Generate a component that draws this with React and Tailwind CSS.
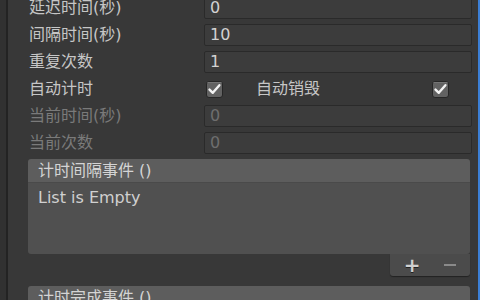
import React from 'react'

const FONT = { fontFamily: '"DejaVu Sans", "Noto Sans CJK SC", sans-serif' }

// Unity style toggle, box + tick drawn as one small icon
function Check() {
  return (
    <svg width="17" height="17" viewBox="0 0 17 17" className="shrink-0 block">
      <rect x="0.5" y="0.5" width="16" height="16" rx="2.5" fill="#626262" stroke="#262626" />
      <path d="M1.5 1.5 H15.5" stroke="#757575" />
      <path d="M3.5 8.6 L6.8 11.8 L13.4 4.2" fill="none" stroke="#f2f2f2" strokeWidth="2.4" strokeLinecap="round" strokeLinejoin="round" />
    </svg>
  )
}

function FieldRow({ label, value, disabled }) {
  return (
    <div className="flex items-center h-[22px]">
      <div className={`w-[175px] shrink-0 ${disabled ? 'text-[#7a7a7a]' : 'text-[#c6c6c6]'}`}>{label}</div>
      <div className="flex-1 h-full bg-[#3c3c3c] border border-[#2a2a2a] rounded-[2px] flex items-center pl-[5px]">
        <span className={disabled ? 'text-[#6e6e6e]' : 'text-[#d2d2d2]'}>{value}</span>
      </div>
    </div>
  )
}

function EventList({ title, empty }) {
  return (
    <div className="-ml-[1px] mr-[2px] flex flex-col">
      <div className="h-[24px] bg-[#5d5d5d] rounded-t-[3px] border-b border-[#4a4a4a] flex items-center pl-[10px] text-[#d4d4d4] shrink-0">
        {title}
      </div>
      {empty && (
        <>
          <div className="h-[71px] bg-[#505050] rounded-b-[3px] pl-[10px] pt-[3px] text-[#d0d0d0]">List is Empty</div>
          <div className="self-end w-[80px] h-[22px] bg-[#4b4b4b] rounded-b-[3px] shadow-[0_1px_1px_rgba(0,0,0,0.4)] flex items-center justify-around px-[6px]">
            <span className="text-[#d0d0d0] text-[20px] leading-none font-bold [text-shadow:0_1px_0_#222]">+</span>
            <span className="w-[12px] h-[2px] bg-[#8a8a8a] ml-[8px]" />
          </div>
        </>
      )}
    </div>
  )
}

export default function App() {
  return (
    <div className="w-[480px] h-[300px] overflow-hidden flex bg-[#383838] text-[16px]" style={FONT}>
      <div className="w-[6px] shrink-0 bg-[#313131]" />
      <div className="w-[2px] shrink-0 bg-[#232323]" />
      <div className="flex-1 flex flex-col pl-[21px] pr-[6px] -mt-[3px] gap-[5px]">
        <FieldRow label="延迟时间(秒)" value="0" />
        <FieldRow label="间隔时间(秒)" value="10" />
        <FieldRow label="重复次数" value="1" />
        <div className="flex items-center h-[22px] text-[#c6c6c6]">
          <div className="w-[177px] shrink-0">自动计时</div>
          <Check />
          <div className="w-[33px] shrink-0" />
          <div className="flex-1">自动销毁</div>
          <Check />
          <div className="w-[23px] shrink-0" />
        </div>
        <FieldRow label="当前时间(秒)" value="0" disabled />
        <FieldRow label="当前次数" value="0" disabled />
        <EventList title="计时间隔事件 ()" empty />
        <div className="h-[1px]" />
        <EventList title="计时完成事件 ()" />
      </div>
      <div className="w-[2px] shrink-0 bg-[#3b7fd6]" />
    </div>
  )
}
